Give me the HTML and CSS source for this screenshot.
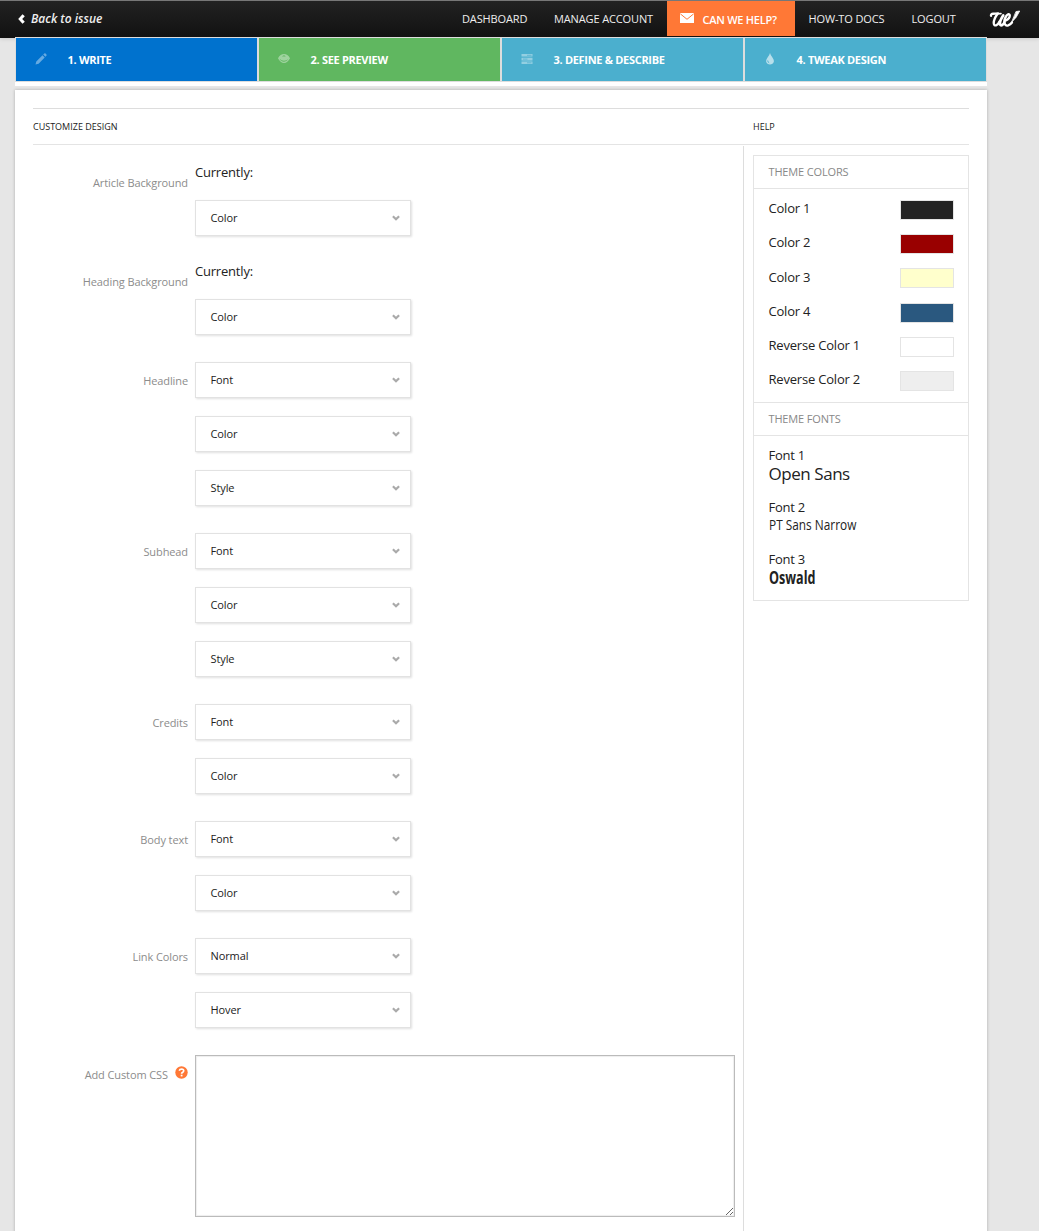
FILE: index.html
```html
<!DOCTYPE html>
<html lang="en">
<head>
<meta charset="utf-8">
<title>Tweak Design</title>
<link rel="stylesheet" href="styles.css">
</head>
<body>
<svg class="defs" aria-hidden="true">
  <symbol id="chev" viewBox="0 0 8 6"><path d="M.9 1.200 4 4.200 7.100 1.200" fill="none" stroke="#aaa" stroke-width="2.200"/></symbol>
</svg>
<header class="topbar">
  <a class="back"><svg width="7" height="10" viewBox="0 0 7 10"><path d="M4.500.3 6.800 2.300 4.200 5l2.600 2.700L4.500 9.700.2 5Z" fill="#fff"/></svg><span>Back to issue</span></a>
  <nav class="nav">
    <a class="n-dash">DASHBOARD</a>
    <a class="n-acc">MANAGE ACCOUNT</a>
    <a class="cta"><svg width="14" height="10" viewBox="0 0 14 10"><path d="M0 0h14v10H0Z" fill="#fff"/><path d="M.3.8 7 6.300 13.700.8" fill="none" stroke="#ff7836" stroke-width="1"/></svg><span>CAN WE HELP?</span></a>
    <a class="n-docs">HOW-TO DOCS</a>
    <a class="n-out">LOGOUT</a>
    <svg class="logo" width="32" height="19" viewBox="0 0 32 19" fill="none" stroke="#fff" stroke-linecap="round" stroke-linejoin="round"><path d="M2 6.800Q1.900 4.700 4 4.700T9.200 4.400" stroke-width="2.400"/><path d="M8.400 5Q4.800 10 4.700 14 4.900 16.900 7.300 16.300 9.300 15.400 10.500 12.500" stroke-width="2.300"/><path d="M14.200 6.500Q10.900 11.500 10.900 14.400 11.200 17 13.300 16 14.800 15 15.400 13.500" stroke-width="2.700"/><path d="M9.500 4.800 12 4.600" stroke-width="1.600"/><path d="M16.400 11.600Q21 9.600 20.800 6.200 20 4 17.600 6.500 14.900 10 15.400 14 16.300 17.200 19.200 16.400 21.400 15.600 23 13.500" stroke-width="2.300"/><path d="M27.300 2.500 30.700 2 27.200 8.300 22.700 13.200Z" fill="#fff" stroke-width=".8"/></svg>
  </nav>
</header>
<main class="page">
  <div class="steps">
    <a class="step write"><svg width="12" height="12" viewBox="0 0 12 12"><path d="M.5 11.500 1.300 8.400 7.500 2.300l2.200 2.200-6.100 6.200ZM8.200 1.600 9.300.5Q10 0 10.600.6l.8.8q.6.6 0 1.300l-1 1.100Z"/></svg><span>1. WRITE</span></a>
    <a class="step preview"><svg width="12" height="12" viewBox="0 0 12 12"><path fill-rule="evenodd" d="M0 5.200Q2.400 1 6 1t6 4.200Q9.600 10 6 10T0 5.200ZM1.300 5.400Q3.200 8.700 6 8.700T10.700 5.400Q8.800 7.800 6 7.800T1.300 5.400Z"/><path d="M4.600 3.300q1.400-1 2.700 0" fill="none" stroke="#60b760"/></svg><span>2. SEE PREVIEW</span></a>
    <a class="step define"><svg width="12" height="12" viewBox="0 0 12 12"><path d="M.5 1h11v2.600H.5ZM.5 4.800h11v2.600H.5ZM.5 8.600h11v2.400H.5Z"/><path d="M6 2.300h4.500M2 6.100h4.500M6 9.800h4.500" stroke="#4bafce" stroke-width=".7"/></svg><span>3. DEFINE &amp; DESCRIBE</span></a>
    <a class="step tweak"><svg width="12" height="12" viewBox="0 0 12 12"><path d="M6 0Q6.600 2.400 8.600 4.800 10.200 7 9.800 8.800 9 11.500 6 11.500T2.200 8.800Q1.800 7 3.400 4.800 5.400 2.400 6 0Z"/><path d="M3.700 7.500q0 1.800 1.500 2.300" fill="none" stroke="#4bafce" stroke-width=".9"/></svg><span>4. TWEAK DESIGN</span></a>
  </div>
  <div class="panel">
    <div class="heads"><h2 class="h-custom">CUSTOMIZE DESIGN</h2><h2 class="h-help">HELP</h2></div>
    <div class="cols">
      <form class="form">
        <div class="group"><label>Article Background</label><div class="fields"><p>Currently:</p><div class="select">Color<svg><use href="#chev"/></svg></div></div></div>
        <div class="group"><label>Heading Background</label><div class="fields"><p>Currently:</p><div class="select">Color<svg><use href="#chev"/></svg></div></div></div>
        <div class="group"><label>Headline</label><div class="fields"><div class="select">Font<svg><use href="#chev"/></svg></div><div class="select">Color<svg><use href="#chev"/></svg></div><div class="select">Style<svg><use href="#chev"/></svg></div></div></div>
        <div class="group"><label>Subhead</label><div class="fields"><div class="select">Font<svg><use href="#chev"/></svg></div><div class="select">Color<svg><use href="#chev"/></svg></div><div class="select">Style<svg><use href="#chev"/></svg></div></div></div>
        <div class="group"><label>Credits</label><div class="fields"><div class="select">Font<svg><use href="#chev"/></svg></div><div class="select">Color<svg><use href="#chev"/></svg></div></div></div>
        <div class="group"><label>Body text</label><div class="fields"><div class="select">Font<svg><use href="#chev"/></svg></div><div class="select">Color<svg><use href="#chev"/></svg></div></div></div>
        <div class="group"><label>Link Colors</label><div class="fields"><div class="select">Normal<svg><use href="#chev"/></svg></div><div class="select">Hover<svg><use href="#chev"/></svg></div></div></div>
        <div class="group custom"><label>Add Custom CSS<svg class="q" width="13" height="13" viewBox="0 0 13 13"><circle cx="6.500" cy="6.500" r="6.200" fill="#ff7836"/><path d="M4.300 4.700Q4.700 3 6.600 3q2.100.1 2.100 1.800 0 1-1.200 1.700-.9.500-.9 1.300" fill="none" stroke="#fff" stroke-width="1.700"/><path d="M5.700 8.700h1.800v1.700H5.700Z" fill="#fff"/></svg></label><textarea class="css"></textarea></div>
      </form>
      <aside class="help">
        <div class="theme">
          <h3>THEME COLORS</h3>
          <ul class="colors">
            <li><span>Color 1</span><i class="sw c1"></i></li>
            <li><span>Color 2</span><i class="sw c2"></i></li>
            <li><span>Color 3</span><i class="sw c3"></i></li>
            <li><span>Color 4</span><i class="sw c4"></i></li>
            <li><span>Reverse Color 1</span><i class="sw r1"></i></li>
            <li><span>Reverse Color 2</span><i class="sw r2"></i></li>
          </ul>
          <h3 class="second">THEME FONTS</h3>
          <dl class="fonts">
            <dt>Font 1</dt><dd><span class="f1">Open Sans</span></dd>
            <dt>Font 2</dt><dd><span class="f2">PT Sans Narrow</span></dd>
            <dt>Font 3</dt><dd><span class="f3">Oswald</span></dd>
          </dl>
        </div>
      </aside>
    </div>
  </div>
</main>
</body>
</html>
```
FILE: styles.css
```css
* { box-sizing: border-box; margin: 0; padding: 0; }
html, body { height: 1231px; overflow: hidden; }
body { background: #e6e6e6; font-family: "Open Sans", sans-serif; color: #222; }
.defs { display: none; }
.topbar { height: 38px; border-top: 1px solid #777; background: linear-gradient(#222, #111); display: flex; justify-content: space-between; box-shadow: 0 1px 4px rgba(0,0,0,.12); padding: 0 18px 0 18px; }
.back { display: flex; align-items: center; height: 35px; gap: 6px; color: #eee; font-size: 12px; font-style: italic; font-weight: 600; white-space: nowrap; }
.nav { display: flex; height: 36px; color: #eee; font-size: 11px; line-height: 36px; letter-spacing: -.13px; white-space: nowrap; }
.n-dash { width: 92px; }
.n-acc { width: 113px; }
.cta { width: 128px; height: 35px; padding: 2px 0 0 13px; background: #ff7836; color: #fff; display: flex; align-items: center; gap: 8.5px; font-weight: 600; letter-spacing: -.26px; }
.cta svg { margin-top: -3px; }
.n-docs { width: 103px; padding-left: 13.5px; }
.n-out { width: 91px; padding-left: 13.5px; }
.logo { margin-top: 8px; }
.page { width: 972px; margin-left: 15px; }
.steps { position: relative; top: -1px; height: 49px; padding: 1px 1px 0; display: grid; grid-template-columns: repeat(4, 241px); gap: 0 2px; background: linear-gradient(#ddd 45px, #fff 45px); }
.step { height: 43px; display: flex; align-items: center; padding: 0 0 1px 18.5px; color: #fff; font-size: 11px; font-weight: 700; letter-spacing: -.3px; white-space: nowrap; }
.step svg { width: 12px; height: 12px; margin: -1px 21px 0 0; fill: #fff; opacity: .4; }
.tweak svg { opacity: .6; }
.write { background: #0072ce; }
.preview { background: #60b760; }
.define, .tweak { background: #4bafce; }
.panel { margin-top: 3px; height: 1200px; padding: 18px; background: #fff; box-shadow: 0 0 3px rgba(0,0,0,.25); }
.heads { height: 37px; border-top: 1px solid #ddd; border-bottom: 1px solid #e4e4e4; display: flex; }
.heads h2 { font-size: 9px; font-weight: 400; line-height: 36px; color: #222; }
.h-custom { width: 720px; }
.cols { display: flex; margin-top: 1px; }
.form { width: 711px; height: 1120px; border-right: 1px solid #ddd; padding-top: 18px; }
.group { display: flex; gap: 7px; margin-bottom: 9px; }
label { width: 155px; height: 36px; display: flex; justify-content: flex-end; align-items: center; font-size: 11px; letter-spacing: -.1px; color: #8c8c8c; white-space: nowrap; }
.custom label { height: 38px; }
.q { margin: -3px 0 0 7px; }
.fields { width: 216px; }
.fields p { font-size: 13px; letter-spacing: -.2px; line-height: 16px; height: 36px; }
.select { width: 216px; height: 36px; margin-bottom: 18px; border: 1px solid #e2e2e2; box-shadow: 1px 1px 2px rgba(0,0,0,.12); padding: 0 10.5px 2px 14.5px; display: flex; justify-content: space-between; align-items: center; font-size: 11px; letter-spacing: -.1px; color: #222; }
.select svg { width: 8px; height: 6px; margin-top: 2px; }
.css { width: 540px; height: 162px; border: 1px solid #bbb; box-shadow: inset 0 0 1px 1px #eee; resize: both; border-radius: 0; outline: 0; }
.help { padding: 9px 0 0 9px; }
.theme { width: 216px; height: 446px; border: 1px solid #e4e4e4; }
.theme h3 { height: 33px; line-height: 32px; border-bottom: 1px solid #e4e4e4; padding-left: 14.5px; font-size: 11px; letter-spacing: -.15px; font-weight: 400; color: #888; }
.theme .second { height: 34px; border-top: 1px solid #e4e4e4; }
.colors { list-style: none; height: 213px; padding: 3px 14px 0 14.5px; font-size: 13px; letter-spacing: -.2px; }
.colors li { height: 34.2px; display: flex; justify-content: space-between; align-items: center; }
.colors span { margin-bottom: 1.6px; }
.sw { width: 54px; height: 20px; margin-top: 2px; border: 1px solid #e4e4e4; }
.c1 { background: #222; }
.c2 { background: #900; }
.c3 { background: #ffc; }
.c4 { background: #2a587f; }
.r1 { background: #fff; }
.r2 { background: #eee; }
.fonts { padding: 10px 14.5px; }
.fonts dt { font-size: 13px; letter-spacing: -.25px; line-height: 18px; height: 18px; }
.fonts dd { height: 34px; line-height: 20px; white-space: nowrap; }
.fonts span { display: block; width: max-content; transform-origin: 0 50%; }
.f1 { font-size: 17px; letter-spacing: -.45px; }
.f2 { font-size: 15px; font-weight: 500; line-height: 17px; transform: scaleX(.79); }
.f3 { font-size: 17px; font-weight: 700; line-height: 20px; transform: scaleX(.74); }
```
